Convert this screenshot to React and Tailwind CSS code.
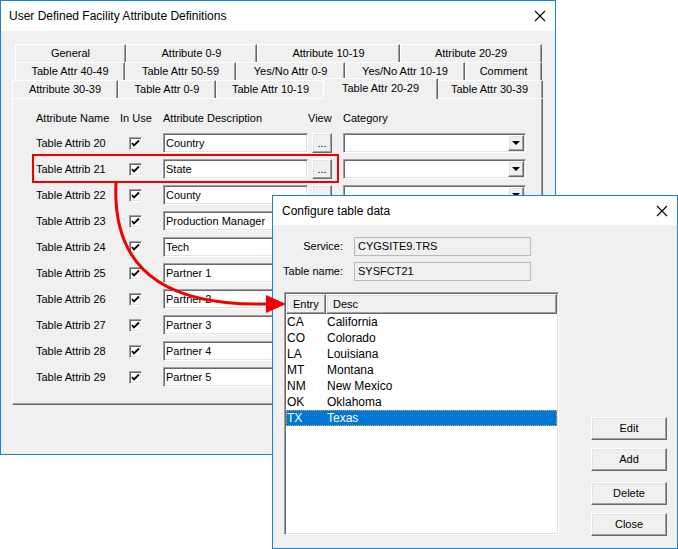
import React from 'react';

const raised =
  'border border-t-white border-l-white border-r-[#696969] border-b-[#696969] shadow-[inset_-1px_-1px_0_#a0a0a0,inset_1px_1px_0_#e3e3e3]';
const sunken =
  'border border-t-[#a0a0a0] border-l-[#a0a0a0] border-r-white border-b-white shadow-[inset_1px_1px_0_#696969,inset_-1px_-1px_0_#e3e3e3]';

const tabRows = [
  { ml: 'ml-[3px]', tabs: [['General', 111], ['Attribute 0-9', 131], ['Attribute 10-19', 143], ['Attribute 20-29', 142]] },
  { ml: 'ml-[3px]', tabs: [['Table Attr 40-49', 110], ['Table Attr 50-59', 111], ['Yes/No Attr 0-9', 109], ['Yes/No Attr 10-19', 120], ['Comment', 77]] },
  { ml: 'ml-0', tabs: [['Attribute 30-39', 106], ['Table Attr 0-9', 98], ['Table Attr 10-19', 109], ['Table Attr 20-29', 111, true], ['Table Attr 30-39', 107]] },
];

const attribs = [
  ['Table Attrib 20', 'Country'],
  ['Table Attrib 21', 'State'],
  ['Table Attrib 22', 'County'],
  ['Table Attrib 23', 'Production Manager'],
  ['Table Attrib 24', 'Tech'],
  ['Table Attrib 25', 'Partner 1'],
  ['Table Attrib 26', 'Partner 2'],
  ['Table Attrib 27', 'Partner 3'],
  ['Table Attrib 28', 'Partner 4'],
  ['Table Attrib 29', 'Partner 5'],
];

const states = [
  ['CA', 'California'],
  ['CO', 'Colorado'],
  ['LA', 'Louisiana'],
  ['MT', 'Montana'],
  ['NM', 'New Mexico'],
  ['OK', 'Oklahoma'],
  ['TX', 'Texas'],
];

function CloseX() {
  return (
    <svg width="12" height="12" viewBox="0 0 12 12">
      <path d="M1 1 L11 11 M11 1 L1 11" stroke="#000" strokeWidth="1.1" />
    </svg>
  );
}

function Checkbox() {
  return (
    <div className={`w-[13px] h-[13px] bg-white ${sunken} flex items-center justify-center`}>
      <svg width="9" height="9" viewBox="0 0 9 9">
        <path d="M1 4 L3 6.5 L8 1.5" stroke="#000" strokeWidth="1.8" fill="none" />
      </svg>
    </div>
  );
}

function Combo() {
  return (
    <div className={`w-[183px] h-[20px] bg-white ${sunken} flex justify-end p-[1px]`}>
      <div className={`w-[16px] h-[16px] bg-[#f0f0f0] ${raised} flex items-center justify-center`}>
        <div className="w-0 h-0 border-l-[4px] border-r-[4px] border-t-[4px] border-l-transparent border-r-transparent border-t-black" />
      </div>
    </div>
  );
}

function Tab({ label, w, selected }) {
  if (selected) {
    return (
      <div
        className="relative z-10 -mt-[2px] -mx-[2px] h-[21px] flex justify-center pt-[1px] bg-[#f0f0f0] border-t border-l border-t-white border-l-white border-r border-r-[#696969] shadow-[inset_-1px_0_0_#a0a0a0]"
        style={{ width: w + 4 }}
      >
        {label}
      </div>
    );
  }
  return (
    <div
      className="h-[18px] flex items-center justify-center bg-[#f0f0f0] border-t border-l border-t-white border-l-white border-r border-r-[#696969] shadow-[inset_-1px_0_0_#a0a0a0]"
      style={{ width: w }}
    >
      {label}
    </div>
  );
}

function Button({ label, className = '' }) {
  return (
    <div className={`w-[76px] h-[23px] bg-[#f0f0f0] ${raised} flex items-center justify-center ${className}`}>{label}</div>
  );
}

function MainWindow() {
  return (
    <div className="w-[556px] h-[455px] border border-[#1883d7] bg-[#f0f0f0] flex flex-col">
      <div className="h-[30px] bg-white flex items-center justify-between pl-[8px] pr-[9px] text-[12px]">
        <span>User Defined Facility Attribute Definitions</span>
        <CloseX />
      </div>
      <div className="pl-[11px] pt-[13px] text-[11px]">
        {tabRows.map((row, i) => (
          <div key={i} className={`flex h-[18px] ${row.ml}`}>
            {row.tabs.map(([label, w, sel]) => (
              <Tab key={label} label={label} w={w} selected={sel} />
            ))}
          </div>
        ))}
        <div className="w-[531px] h-[307px] border border-t-white border-l-white border-r-[#696969] border-b-[#696969] shadow-[inset_-1px_-1px_0_#a0a0a0] pl-[23px] pt-[12px]">
          <div className="flex h-[14px] items-center">
            <div className="w-[84px]">Attribute Name</div>
            <div className="w-[43px]">In Use</div>
            <div className="w-[145px]">Attribute Description</div>
            <div className="w-[35px]">View</div>
            <div>Category</div>
          </div>
          <div className="mt-[8px] flex flex-col gap-[6px]">
            {attribs.map(([name, desc]) => (
              <div key={name} className="flex h-[20px] items-center">
                <div className="w-[84px]">{name}</div>
                <div className="w-[43px] pl-[9px]">
                  <Checkbox />
                </div>
                <div className={`w-[145px] h-[20px] bg-white ${sunken} flex items-center pl-[2px]`}>{desc}</div>
                <div className={`ml-[4px] w-[20px] h-[20px] bg-[#f0f0f0] ${raised} flex items-end justify-center pb-[3px] leading-none`}>...</div>
                <div className="ml-[11px]">
                  <Combo />
                </div>
              </div>
            ))}
          </div>
        </div>
      </div>
    </div>
  );
}

function ConfigureDialog() {
  return (
    <div className="absolute left-[272px] top-[195px] w-[406px] h-[354px] border border-[#1883d7] bg-[#f0f0f0] flex flex-col z-10">
      <div className="h-[29px] bg-white flex items-center justify-between pl-[9px] pr-[9px] text-[12px]">
        <span>Configure table data</span>
        <CloseX />
      </div>
      <div className="flex text-[11px]">
        <div className="flex flex-col">
          <div className="mt-[12px] flex items-center h-[19px]">
            <div className="w-[70px] text-right">Service:</div>
            <div className="ml-[11px] w-[177px] h-[19px] border border-[#b9b9b9] flex items-center pl-[3px]">CYGSITE9.TRS</div>
          </div>
          <div className="mt-[6px] flex items-center h-[19px]">
            <div className="w-[70px] text-right">Table name:</div>
            <div className="ml-[11px] w-[177px] h-[19px] border border-[#b9b9b9] flex items-center pl-[3px]">SYSFCT21</div>
          </div>
          <div className={`ml-[11px] mt-[11px] w-[275px] h-[243px] bg-white ${sunken} p-[1px] text-[12px]`}>
            <div className="flex h-[20px] text-[11px]">
              <div className={`w-[40px] ${raised} bg-[#f0f0f0] flex items-center pl-[6px]`}>Entry</div>
              <div className={`flex-1 ${raised} bg-[#f0f0f0] flex items-center pl-[6px]`}>Desc</div>
            </div>
            {states.map(([code, name]) => {
              const sel = code === 'TX';
              return (
                <div
                  key={code}
                  className={`flex h-[16px] items-center ${sel ? 'bg-[#0078d7] text-white border border-dotted border-[#e8a040]' : 'border border-transparent'}`}
                >
                  <div className="w-[40px]">{code}</div>
                  <div>{name}</div>
                </div>
              );
            })}
          </div>
        </div>
        <div className="ml-[32px] pt-[192px] flex flex-col">
          <Button label="Edit" />
          <Button label="Add" className="mt-[8px]" />
          <Button label="Delete" className="mt-[11px]" />
          <Button label="Close" className="mt-[8px]" />
        </div>
      </div>
    </div>
  );
}

export default function App() {
  return (
    <div className="relative w-[678px] h-[549px] bg-white overflow-hidden text-black font-['Liberation_Sans',Arial,sans-serif]">
      <MainWindow />
      <div className="absolute left-[32px] top-[154px] w-[307px] h-[29px] border-2 border-[#f00000] pointer-events-none" />
      <ConfigureDialog />
      <svg className="absolute left-0 top-0 z-20 pointer-events-none" width="678" height="549">
        <path d="M116 182 C 111 282 182 306 268 304" stroke="#f00000" strokeWidth="3" fill="none" />
        <polygon points="266,295 286,304 266,313" fill="#f00000" />
      </svg>
    </div>
  );
}
